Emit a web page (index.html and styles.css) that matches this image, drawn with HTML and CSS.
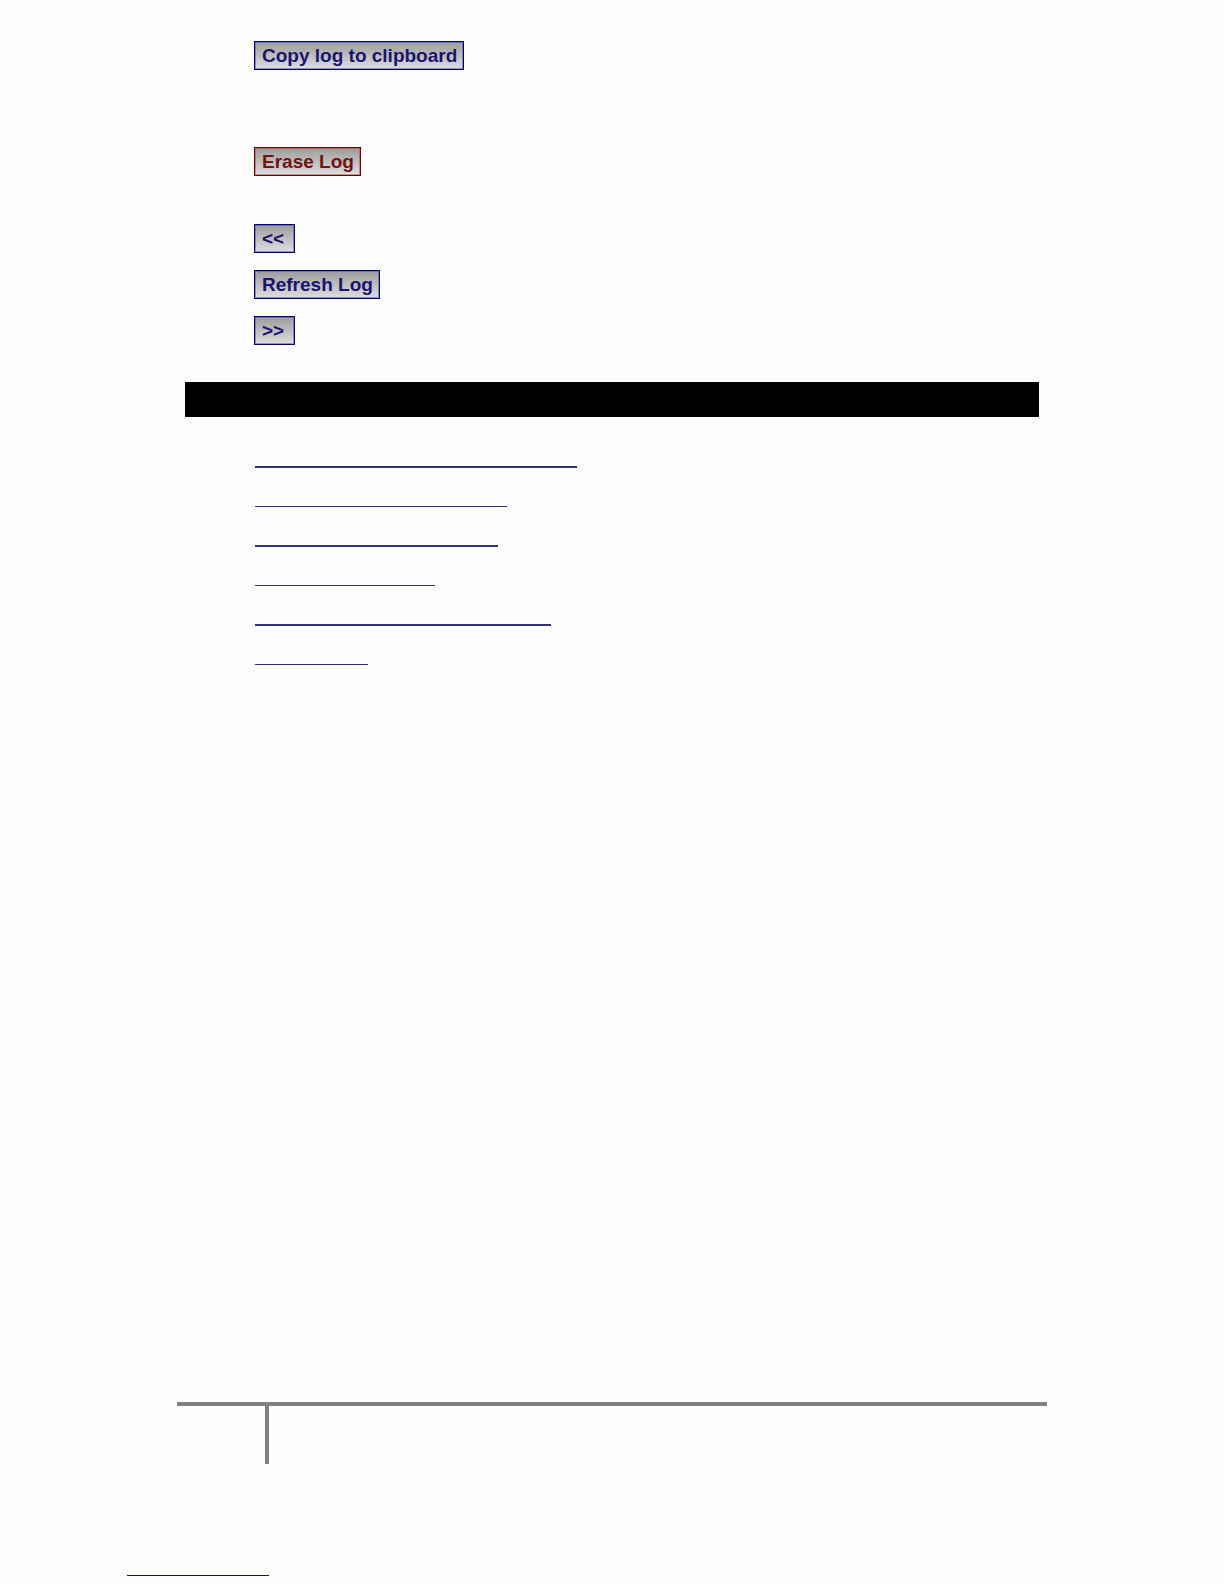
FILE: index.html
```
<!DOCTYPE html>
<html lang="en">
<head>
<meta charset="UTF-8">
<meta name="viewport" content="width=device-width, initial-scale=1.0">
<title>Log</title>
<link rel="stylesheet" href="styles.css">
</head>
<body>
<main>
  <div class="actions">
    <button type="button" class="btn copy">Copy log to clipboard</button>
    <button type="button" class="btn erase">Erase Log</button>
    <button type="button" class="btn">&lt;&lt;</button>
    <button type="button" class="btn">Refresh Log</button>
    <button type="button" class="btn">&gt;&gt;</button>
  </div>

  <div class="bar"></div>

  <ul class="links">
    <li class="link-1"><a href="#" class="thick"></a></li>
    <li class="link-2"><a href="#"></a></li>
    <li class="link-3"><a href="#" class="thick"></a></li>
    <li class="link-4"><a href="#"></a></li>
    <li class="link-5"><a href="#" class="thick"></a></li>
    <li class="link-6"><a href="#"></a></li>
  </ul>
</main>

<footer>
  <div class="page-number"></div>
</footer>
<a href="#" class="bottom-link"></a>
</body>
</html>
```

FILE: styles.css
```
* {
  box-sizing: border-box;
}
body {
  margin: 0;
  min-height: 100vh;
  padding: 41px 177px 8px;
  display: flex;
  flex-direction: column;
  background: #fefefe;
  font-family: "Liberation Sans", Arial, sans-serif;
}

/* buttons */
.actions {
  display: flex;
  flex-direction: column;
  align-items: flex-start;
  gap: 17px;
  padding-left: 77px;
}
.btn {
  height: 29px;
  min-width: 41px;
  padding: 0 6px 0 7px;
  border: 1px solid #000070;
  border-radius: 0;
  background: linear-gradient(#9c9c9c, #dedede);
  box-shadow: inset 0 0 0 1px rgba(70, 70, 180, 0.5);
  color: #1a146e;
  font-family: inherit;
  font-size: 19px;
  font-weight: bold;
  line-height: 27px;
  text-align: left;
}
.copy {
  margin-bottom: 60px;
}
.erase {
  margin-bottom: 31px;
  border-color: #650000;
  box-shadow: inset 0 0 0 1px rgba(170, 70, 70, 0.5);
  color: #701414;
}

.bar {
  height: 35px;
  margin: 37px 8px 49px;
  background: #000;
}

/* underlined links */
.links {
  display: flex;
  flex-direction: column;
  gap: 38px;
  margin: 0;
  padding: 0 0 0 78px;
  list-style: none;
}
.links a {
  display: block;
  border-bottom: 1px solid #3b2c6e;
}
.links .thick {
  border-bottom: 2px solid #32327c;
}
.link-1 { width: 322px; }
.link-2 { width: 252px; }
.link-3 { width: 243px; }
.link-4 { width: 180px; }
.link-5 { width: 296px; }
.link-6 { width: 113px; }

footer {
  margin-top: auto;
  border-top: 4px solid #808080;
}
.page-number {
  width: 92px;
  height: 58px;
  border-right: 4px solid #808080;
}
.bottom-link {
  width: 142px;
  margin: 111px 0 0 -50px;
  border-bottom: 1px solid #141478;
}
```
